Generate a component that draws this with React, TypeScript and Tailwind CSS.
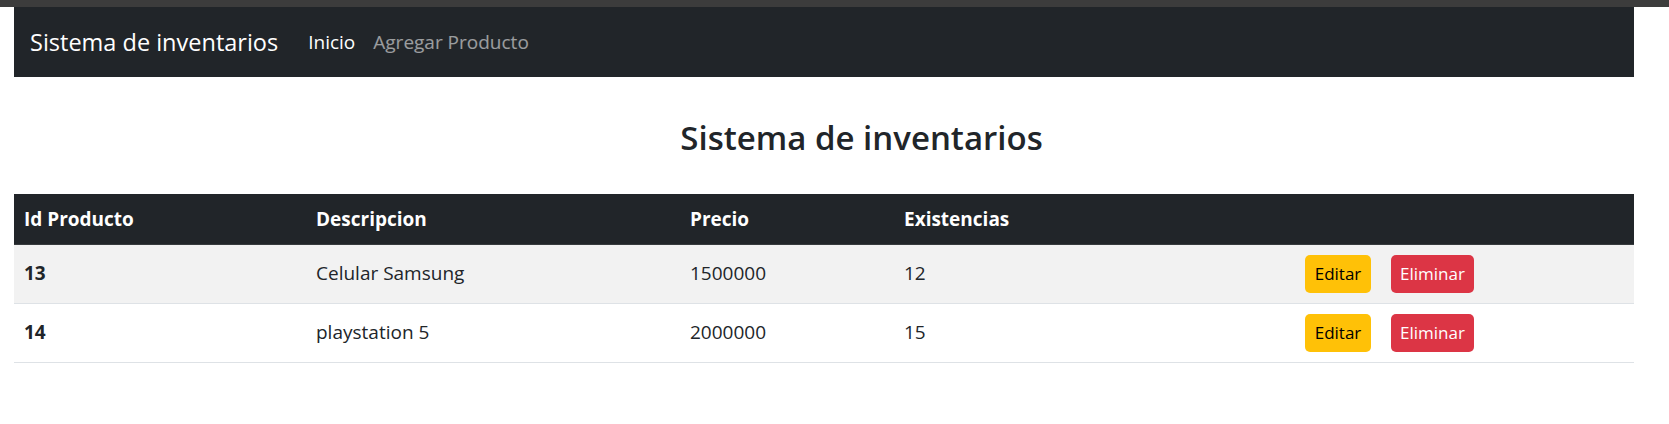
const productos = [
  { id: 13, descripcion: "Celular Samsung", precio: 1500000, existencias: 12 },
  { id: 14, descripcion: "playstation 5", precio: 2000000, existencias: 15 },
];

export default function App() {
  return (
    <div className="min-h-[424px] bg-white font-['Open_Sans',sans-serif] text-[19px] text-[#212529]">
      <div className="h-[7px] bg-[#3c3c3c]" />

      <div className="ml-[14px] w-[1620px]">
        <nav className="flex h-[70px] items-center bg-[#212529] px-[16px]">
          <span className="mr-[21px] text-[23.5px] leading-[37px] text-white">Sistema de inventarios</span>
          <a className="px-[9px] text-white">Inicio</a>
          <a className="px-[9px] text-white/55">Agregar Producto</a>
        </nav>

        <h3 className="mt-[40px] pl-[75px] text-center text-[33px] leading-[42px] font-semibold">
          Sistema de inventarios
        </h3>

        <table className="mt-[35px] w-full border-collapse text-left">
          <thead>
            <tr className="h-[50px] border-b border-[#373b3e] bg-[#212529] text-white">
              <th className="w-[292px] px-[10px] font-bold">Id Producto</th>
              <th className="w-[374px] px-[10px] font-bold">Descripcion</th>
              <th className="w-[214px] px-[10px] font-bold">Precio</th>
              <th className="w-[401px] px-[10px] font-bold">Existencias</th>
              <th className="px-[10px]" />
            </tr>
          </thead>
          <tbody>
            {productos.map((p, i) => (
              <tr
                key={p.id}
                className={`h-[59px] border-b border-[#dee2e6] ${i % 2 === 0 ? "bg-[#f2f2f2]" : "bg-white"}`}
              >
                <td className="px-[10px] font-bold">{p.id}</td>
                <td className="px-[10px]">{p.descripcion}</td>
                <td className="px-[10px]">{p.precio}</td>
                <td className="px-[10px]">{p.existencias}</td>
                <td className="px-[10px]">
                  <div className="flex gap-[20px]">
                    <button className="h-[38px] w-[66px] rounded-[5px] bg-[#ffc107] text-[17px] text-black">
                      Editar
                    </button>
                    <button className="h-[38px] w-[83px] rounded-[5px] bg-[#dc3545] text-[17px] text-white">
                      Eliminar
                    </button>
                  </div>
                </td>
              </tr>
            ))}
          </tbody>
        </table>
      </div>
    </div>
  );
}
